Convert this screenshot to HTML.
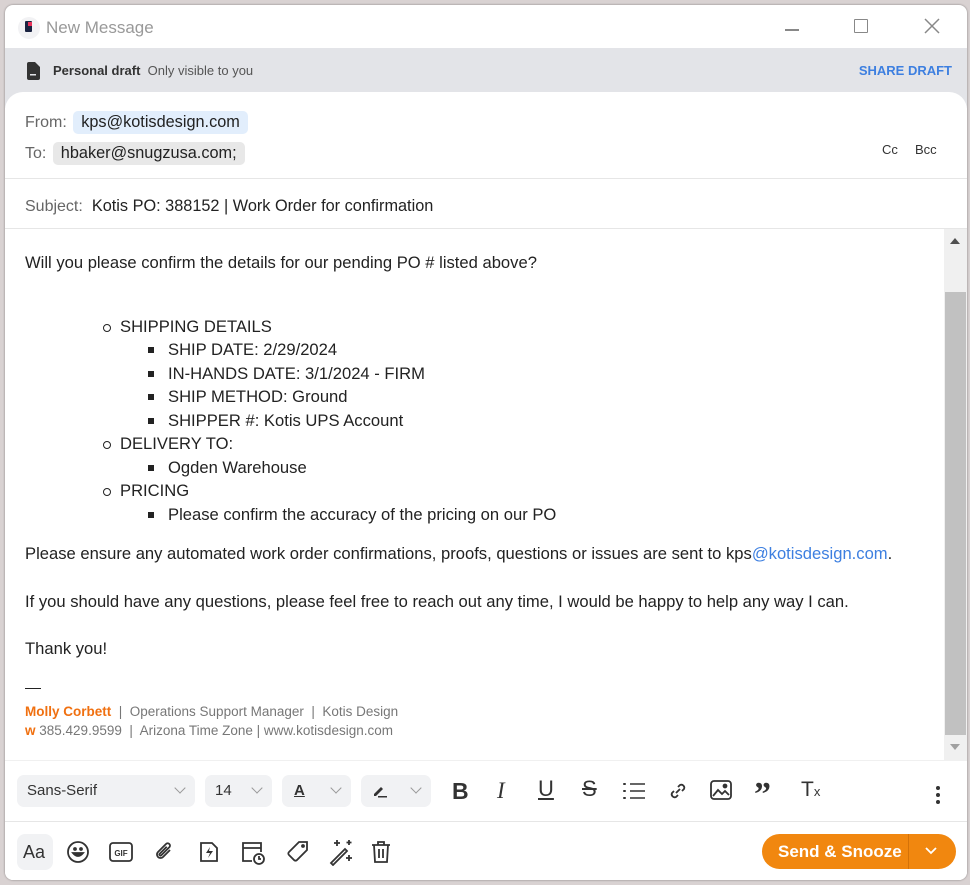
<!DOCTYPE html>
<html><head><meta charset="utf-8"><style>
*{box-sizing:border-box;margin:0;padding:0}
body{width:970px;height:885px;background:#d9d2d2;font-family:"Liberation Sans",sans-serif;position:relative;overflow:hidden;color:#222}
.win{position:absolute;left:5px;top:5px;width:962px;height:875px;background:#fff;border-radius:8px;overflow:hidden;box-shadow:0 0 2px rgba(0,0,0,.4)}
.abs{position:absolute}
.draft{position:absolute;left:0;top:43px;width:962px;height:60px;background:#e3e4e8}
.card{position:absolute;left:0;top:87px;width:962px;height:788px;background:#fff;border-radius:18px 18px 0 0}
.lbl{color:#666;font-size:16px}
.chip{display:inline-block;padding:2px 8px;border-radius:5px;font-size:16.3px;color:#222}
.sep{position:absolute;left:0;width:962px;height:1px;background:#e6e6e6}
.body{position:absolute;left:20px;top:246px;font-size:16.6px;color:#222;line-height:23.5px}
ul{list-style:none}
.l1{padding-left:95px}
.l1>li{position:relative}
.l1>li:before{content:"";position:absolute;left:-17px;top:9px;width:6px;height:6px;border:1.2px solid #222;border-radius:50%}
.l2{padding-left:48px}
.l2>li{position:relative}
.l2>li:before{content:"";position:absolute;left:-20px;top:9px;width:6px;height:6px;background:#222}
.sel{position:absolute;top:770px;height:32px;background:#f1f2f4;border-radius:7px;font-size:15px;color:#333;padding:7px 10px}
.chev{position:absolute;right:11px;top:9px;width:8px;height:8px;border-right:1.5px solid #999;border-bottom:1.5px solid #999;transform:rotate(45deg)}
svg{position:absolute}
</style></head><body>
<div class="win">
 <div class="abs" style="left:13px;top:12px;width:22px;height:22px;border-radius:50%;background:#f2f2f4"></div>
 <div class="abs" style="left:20px;top:16px;width:7px;height:11px;background:#1a2340;border-radius:1px"></div>
 <div class="abs" style="left:23px;top:17px;width:4px;height:4px;background:#e8325a"></div>
 <div class="abs" style="left:41px;top:13px;font-size:17px;color:#999">New Message</div>
 <div class="abs" style="left:780px;top:24px;width:14px;height:1.5px;background:#888"></div>
 <div class="abs" style="left:849px;top:14px;width:14px;height:14px;border:1.5px solid #888;border-radius:1px"></div>
 <svg style="left:919px;top:13px" width="16" height="16"><path d="M1 1L15 15M15 1L1 15" stroke="#888" stroke-width="1.5"/></svg>
 <div class="draft">
  <svg style="left:21px;top:14px" width="14" height="18"><path d="M1 2a2 2 0 0 1 2-2h6l5 5v11a2 2 0 0 1-2 2H3a2 2 0 0 1-2-2z" fill="#333"/><rect x="4" y="12" width="6" height="1.5" fill="#e3e4e8"/></svg>
  <div class="abs" style="left:48px;top:15px;font-size:13px;color:#333"><b>Personal draft</b>&nbsp; <span style="color:#555">Only visible to you</span></div>
  <div class="abs" style="right:15px;top:15px;font-size:13px;color:#3d7fe0;font-weight:bold">SHARE DRAFT</div>
 </div>
 <div class="card">
  <div class="abs" style="left:20px;top:19px"><span class="lbl">From:</span> <span class="chip" style="background:#e2eefc;margin-left:2px">kps@kotisdesign.com</span></div>
  <div class="abs" style="left:20px;top:50px"><span class="lbl">To:</span> <span class="chip" style="background:#e8e8e8;margin-left:2px">hbaker@snugzusa.com;</span></div>
  <div class="abs" style="left:877px;top:50px;font-size:13px;color:#333">Cc</div>
  <div class="abs" style="left:910px;top:50px;font-size:13px;color:#333">Bcc</div>
  <div class="sep" style="top:86px"></div>
  <div class="abs" style="left:20px;top:105px;font-size:16.3px"><span class="lbl">Subject:</span>&nbsp; Kotis PO: 388152 | Work Order for confirmation</div>
  <div class="sep" style="top:136px"></div>
  <div class="abs" style="left:939px;top:137px;width:23px;height:531px;background:#f0f0f0"></div>
  <div class="abs" style="left:940px;top:200px;width:21px;height:443px;background:#c1c1c1"></div>
  <svg style="left:944px;top:145px" width="12" height="8"><path d="M1 7L6 1L11 7z" fill="#505050"/></svg>
  <svg style="left:944px;top:651px" width="12" height="8"><path d="M1 1L6 7L11 1z" fill="#a0a0a0"/></svg>
 </div>
 <div class="body">
  <div>Will you please confirm the details for our pending PO # listed above?</div>
  <div style="height:40px"></div>
  <ul class="l1">
   <li>SHIPPING DETAILS<ul class="l2"><li>SHIP DATE: 2/29/2024</li><li>IN-HANDS DATE: 3/1/2024 - FIRM</li><li>SHIP METHOD: Ground</li><li>SHIPPER #: Kotis UPS Account</li></ul></li>
   <li>DELIVERY TO:<ul class="l2"><li>Ogden Warehouse</li></ul></li>
   <li>PRICING<ul class="l2"><li>Please confirm the accuracy of the pricing on our PO</li></ul></li>
  </ul>
  <div style="margin-top:16px">Please ensure any automated work order confirmations, proofs, questions or issues are sent to kps<span style="color:#3d7fe0">@kotisdesign.com</span>.</div>
  <div style="margin-top:24px">If you should have any questions, please feel free to reach out any time, I would be happy to help any way I can.</div>
  <div style="margin-top:24px">Thank you!</div>
  <div style="margin-top:27px;width:16px;height:1.5px;background:#222"></div>
  <div style="font-size:13.5px;color:#777;line-height:19px;margin-top:13px"><b style="color:#f07010">Molly Corbett</b> &nbsp;|&nbsp; Operations Support Manager &nbsp;|&nbsp; Kotis Design<br><b style="color:#f07010">w</b> 385.429.9599 &nbsp;|&nbsp; Arizona Time Zone | www.kotisdesign.com</div>
 </div>
 <div class="sep" style="top:755px;background:#f0f0f0"></div>
 <div class="sel" style="left:12px;width:178px">Sans-Serif<div class="chev"></div></div>
 <div class="sel" style="left:200px;width:67px">14<div class="chev"></div></div>
 <div class="sel" style="left:277px;width:69px"><span style="font-weight:bold;text-decoration:underline;margin-left:2px">A</span><div class="chev"></div></div>
 <div class="sel" style="left:356px;width:70px"><svg style="left:11px;top:9px" width="16" height="14"><path d="M2 10l7-7 2 2-7 7H2z" fill="#333"/><rect x="6" y="12" width="9" height="1.5" fill="#333"/></svg><div class="chev"></div></div>
 <div class="abs" style="left:447px;top:773px;font-size:23px;font-weight:bold;color:#333">B</div>
 <div class="abs" style="left:492px;top:773px;font-size:23px;font-style:italic;color:#333;font-family:'Liberation Serif',serif">I</div>
 <div class="abs" style="left:533px;top:771px;font-size:22px;color:#333;text-decoration:underline">U</div>
 <div class="abs" style="left:577px;top:771px;font-size:22px;color:#333;text-decoration:line-through">S</div>
 <svg style="left:617px;top:777px" width="24" height="18"><g stroke="#333" stroke-width="1.6"><path d="M8 2h15M8 9h15M8 16h15"/><path d="M2 2h1M2 9h1M2 16h1" stroke-linecap="round" stroke-width="2"/></g></svg>
 <svg style="left:662px;top:775px" width="22" height="22" fill="none" stroke="#333" stroke-width="1.8"><path d="M9 13l4-4M7 11l-2 2a3 3 0 0 0 4 4l2-2M15 11l2-2a3 3 0 0 0-4-4l-2 2"/></svg>
 <svg style="left:705px;top:775px" width="22" height="20" fill="none" stroke="#333" stroke-width="1.8"><rect x="1" y="1" width="20" height="18" rx="3"/><path d="M3 16l5-6 4 4 3-3 4 4"/><circle cx="15" cy="6" r="1.5" fill="#333"/></svg>
 <div class="abs" style="left:749px;top:773px;font-size:34px;font-weight:bold;color:#333;font-family:'Liberation Serif',serif;line-height:34px">”</div>
 <div class="abs" style="left:796px;top:773px;font-size:21px;color:#333">T<span style="font-size:13px">x</span></div>
 <svg style="left:930px;top:780px" width="6" height="20"><circle cx="3" cy="3" r="2" fill="#333"/><circle cx="3" cy="10" r="2" fill="#333"/><circle cx="3" cy="17" r="2" fill="#333"/></svg>
 <div class="sep" style="top:816px"></div>
 <div class="abs" style="left:12px;top:829px;width:36px;height:36px;background:#f1f2f4;border-radius:8px;font-size:18px;color:#333;padding:8px 0 0 6px">Aa</div>
 <svg style="left:61px;top:835px" width="24" height="24" fill="none" stroke="#333" stroke-width="1.8"><circle cx="12" cy="12" r="10"/><path d="M7 13q5 6 10 0z" fill="#333"/><circle cx="9" cy="9" r="1" fill="#333"/><circle cx="15" cy="9" r="1" fill="#333"/></svg>
 <svg style="left:104px;top:836px" width="24" height="22" fill="none" stroke="#333" stroke-width="1.8"><rect x="1" y="2" width="22" height="18" rx="3"/><text x="12" y="15" font-size="8" font-weight="bold" text-anchor="middle" fill="#333" stroke="none" font-family="Liberation Sans">GIF</text></svg>
 <svg style="left:148px;top:835px" width="24" height="24" fill="none" stroke="#333" stroke-width="1.8"><path d="M17 10l-7 7a3.5 3.5 0 0 1-5-5l8-8a2.3 2.3 0 0 1 3.3 3.3l-8 8a1 1 0 0 1-1.6-1.6l7-7"/></svg>
 <svg style="left:193px;top:835px" width="22" height="24" fill="none" stroke="#333" stroke-width="1.8"><path d="M3 3h11l5 5v13H3z"/><path d="M12 7l-4 6h4l-2 5 5-7h-4z" fill="#333" stroke="none"/></svg>
 <svg style="left:235px;top:835px" width="26" height="26" fill="none" stroke="#333" stroke-width="1.8"><path d="M12 21H3V3h18v9M3 8h18"/><circle cx="19" cy="19" r="5"/><path d="M19 16v3h2"/></svg>
 <svg style="left:281px;top:835px" width="24" height="24" fill="none" stroke="#333" stroke-width="1.8"><path d="M13 2h8v8L11 20a2 2 0 0 1-3 0L3 15a2 2 0 0 1 0-3z"/><circle cx="17" cy="6" r="1" fill="#333"/></svg>
 <svg style="left:323px;top:833px" width="26" height="28" fill="none" stroke="#333" stroke-width="1.8"><path d="M3 25L17 11l2 2L5 27z"/><path d="M9 2v6M6 5h6M21 2v5M18.5 4.5h5M21 17v6M18 20h6"/></svg>
 <svg style="left:366px;top:835px" width="20" height="24" fill="none" stroke="#333" stroke-width="1.8"><path d="M1 5h18M7 5V2h6v3M3 5l1 17h12l1-17M8 9v9M12 9v9"/></svg>
 <div class="abs" style="left:757px;top:829px;width:194px;height:35px;background:#f1870f;border-radius:18px"></div>
 <div class="abs" style="left:903px;top:829px;width:1px;height:35px;background:#d47208"></div>
 <div class="abs" style="left:773px;top:837px;font-size:17px;font-weight:bold;color:#fff">Send &amp; Snooze</div>
 <svg style="left:920px;top:842px" width="12" height="8"><path d="M1 1l5 5 5-5" stroke="#fff" stroke-width="1.8" fill="none"/></svg>
</div>
</body></html>
